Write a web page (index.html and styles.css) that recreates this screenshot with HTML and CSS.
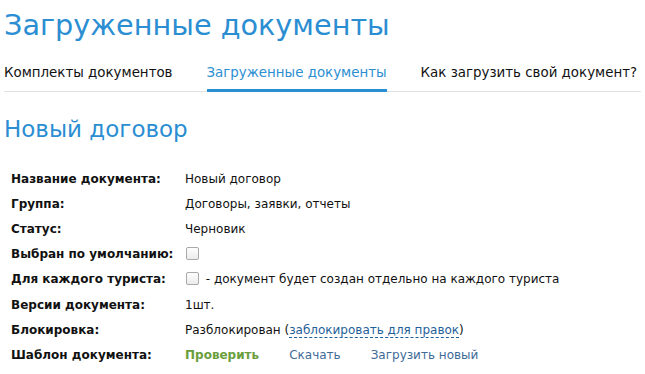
FILE: index.html
```html
<!DOCTYPE html>
<html lang="ru">

<head>
    <meta charset="UTF-8">
    <meta name="viewport" content="width=device-width, initial-scale=1.0">
    <title>Загруженные документы</title>
    <link rel="stylesheet" href="styles.css">
</head>

<body>
    <main class="page">
        <h1 class="title">Загруженные документы</h1>

        <nav class="tabs">
            <a class="tab" href="#">Комплекты документов</a>
            <a class="tab active" href="#">Загруженные документы</a>
            <a class="tab" href="#">Как загрузить свой документ?</a>
        </nav>

        <h2 class="doc-title">Новый договор</h2>

        <table class="props">
            <tr>
                <th>Название документа:</th>
                <td>Новый договор</td>
            </tr>
            <tr>
                <th>Группа:</th>
                <td>Договоры, заявки, отчеты</td>
            </tr>
            <tr>
                <th>Статус:</th>
                <td>Черновик</td>
            </tr>
            <tr>
                <th>Выбран по умолчанию:</th>
                <td><span class="check"></span></td>
            </tr>
            <tr>
                <th>Для каждого туриста:</th>
                <td><span class="check"></span> - документ будет создан отдельно на каждого туриста</td>
            </tr>
            <tr>
                <th>Версии документа:</th>
                <td>1шт.</td>
            </tr>
            <tr>
                <th>Блокировка:</th>
                <td>Разблокирован (<a class="dashed" href="#">заблокировать для правок</a>)</td>
            </tr>
            <tr>
                <th>Шаблон документа:</th>
                <td class="actions">
                    <a class="check-link" href="#">Проверить</a>
                    <a class="link" href="#">Скачать</a>
                    <a class="link" href="#">Загрузить новый</a>
                </td>
            </tr>
        </table>
    </main>
</body>

</html>
```

FILE: styles.css
```css
* {
    margin: 0;
    padding: 0;
    box-sizing: border-box;
}

body {
    font-family: "DejaVu Sans", Verdana, sans-serif;
    color: #111;
    background: #fff;
}

.page {
    padding: 0 4px;
}

.title {
    font-size: 28.7px;
    font-weight: normal;
    color: #2b8ed2;
    line-height: 38px;
    padding-top: 6px;
}

.tabs {
    display: flex;
    gap: 34px;
    margin-top: 16px;
    border-bottom: 1px solid #e2e2e2;
    white-space: nowrap;
}

.tab {
    font-size: 13.4px;
    color: #111;
    text-decoration: none;
    line-height: 26px;
    padding-bottom: 3px;
    border-bottom: 3px solid transparent;
    margin-bottom: -1px;
}

.tab.active {
    color: #2b8ed2;
    border-bottom-color: #2b8ed2;
}

.doc-title {
    font-size: 23px;
    font-weight: normal;
    color: #2b8ed2;
    margin-top: 22px;
    line-height: 30px;
}

.props {
    border-collapse: collapse;
    margin-top: 22px;
    margin-left: 7px;
    font-size: 12px;
}

.props th {
    text-align: left;
    font-weight: bold;
    width: 174px;
    height: 25.2px;
    padding: 0;
}

.props td {
    height: 25.2px;
    padding: 0;
}

.check {
    display: inline-block;
    width: 13px;
    height: 13px;
    border: 1px solid #a9a9a9;
    border-radius: 2px;
    background: linear-gradient(#fdfdfd, #ececec);
    vertical-align: -2px;
    margin-left: 1px;
    margin-right: 3px;
}

.dashed {
    color: #1f5f99;
    text-decoration: none;
    border-bottom: 1px dashed #1f5f99;
}

.actions {
    display: flex;
    gap: 30px;
    align-items: center;
}

.check-link {
    color: #6a9e3c;
    font-weight: bold;
    text-decoration: none;
}

.link {
    color: #3f6b97;
    text-decoration: none;
}
```
